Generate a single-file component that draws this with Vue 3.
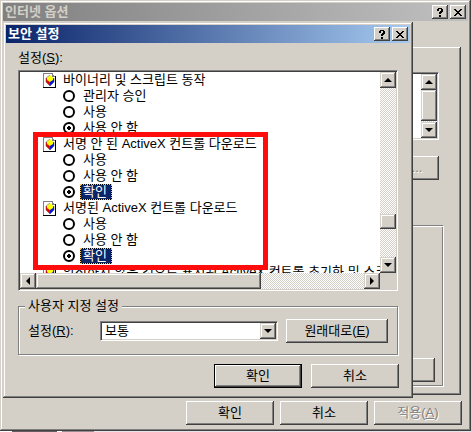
<script setup>
import { ref } from 'vue'

const groups = ref([
    {
        name: 'behavior',
        title: '바이너리 및 스크립트 동작',
        options: ['관리자 승인', '사용', '사용 안 함'],
        selected: '사용 안 함'
    },
    {
        name: 'unsigned',
        title: '서명 안 된 ActiveX 컨트롤 다운로드',
        options: ['사용', '사용 안 함', '확인'],
        selected: '확인'
    },
    {
        name: 'signed',
        title: '서명된 ActiveX 컨트롤 다운로드',
        options: ['사용', '사용 안 함', '확인'],
        selected: '확인'
    },
    {
        name: 'unsafe',
        title: '안전하지 않은 것으로 표시된 ActiveX 컨트롤 초기화 및 스크립트',
        options: [],
        selected: ''
    }
])

const levels = ['높음', '보통', '약간 낮음', '낮음']
const level = ref('보통')
</script>

<template>
    <div class="desktop">
        <div class="window">
            <header class="title_bar inactive">
                <h1>인터넷 옵션</h1>
                <button class="title_button" aria-label="도움말">
                    <svg width="8" height="9" viewBox="0 0 8 9" shape-rendering="crispEdges">
                        <path d="M2 0h4v1h1v3h-1v1h-1v1h-2v-2h1v-1h1v-2h-2v2h-2v-2h1zM3 7h2v2h-2z" />
                    </svg>
                </button>
                <button class="title_button" aria-label="닫기">
                    <svg width="8" height="7" viewBox="0 0 8 7" shape-rendering="crispEdges">
                        <path d="M0 0h2v1h1v1h2v-1h1v-1h2v1h-1v1h-1v1h-1v1h1v1h1v1h1v1h-2v-1h-1v-1h-2v1h-1v1h-2v-1h1v-1h1v-1h1v-1h-1v-1h-1v-1h-1z" />
                    </svg>
                </button>
            </header>

            <div class="tab_page">
                <div class="zone_list sunken">
                    <div class="zone_view"></div>
                    <div class="scroll_v">
                        <button class="scroll_button" aria-label="위로"><i class="arrow up"></i></button>
                        <div class="thumb zone_thumb"></div>
                        <div class="space"></div>
                        <button class="scroll_button" aria-label="아래로"><i class="arrow down"></i></button>
                    </div>
                </div>
                <div class="button_row sites">
                    <button class="push" disabled>사이트...</button>
                </div>
                <div class="level_box">
                    <button class="push" aria-label="기본 수준"></button>
                </div>
            </div>

            <footer class="button_row main_buttons">
                <button class="push">확인</button>
                <button class="push">취소</button>
                <button class="push" disabled>적용(<u>A</u>)</button>
            </footer>
        </div>
        <div class="behind"></div>

        <div class="window dialog" role="dialog">
            <header class="title_bar">
                <h1>보안 설정</h1>
                <button class="title_button" aria-label="도움말">
                    <svg width="8" height="9" viewBox="0 0 8 9" shape-rendering="crispEdges">
                        <path d="M2 0h4v1h1v3h-1v1h-1v1h-2v-2h1v-1h1v-2h-2v2h-2v-2h1zM3 7h2v2h-2z" />
                    </svg>
                </button>
                <button class="title_button" aria-label="닫기">
                    <svg width="8" height="7" viewBox="0 0 8 7" shape-rendering="crispEdges">
                        <path d="M0 0h2v1h1v1h2v-1h1v-1h2v1h-1v1h-1v1h-1v1h1v1h1v1h1v1h-2v-1h-1v-1h-2v1h-1v1h-2v-1h1v-1h1v-1h1v-1h-1v-1h-1v-1h-1z" />
                    </svg>
                </button>
            </header>

            <div class="dialog_body">
                <p id="settings_label" class="list_label">설정(<u>S</u>):</p>
                <div class="settings sunken" aria-labelledby="settings_label">
                    <div class="tree">
                        <div v-for="group of groups" :key="group.name" role="radiogroup">
                            <div class="row">
                                <svg class="doc" width="13" height="15" viewBox="0 0 13 15">
                                    <path d="M0 0h10v1h-9v13h-1z" fill="#808080" />
                                    <path d="M1 1h9v2h2v11h-11z" fill="#fff" />
                                    <path d="M12 3h1v12h-13v-1h12z" fill="#000" />
                                    <path d="M9 1h1v1h1v1h1v1h-3z" fill="#808080" />
                                    <path d="M3 5l4 2v6l-4-4z" fill="#f00000" />
                                    <path d="M11 5v4l-4 4v-6z" fill="#0010e0" />
                                    <path d="M7 2l3 3v2l-3 2l-3-2v-2z" fill="#ff0" />
                                    <path d="M7 2l-4 3v4l4 4l4-4v-4" fill="none" stroke="#404040" stroke-width="0.500" />
                                </svg>
                                <span>{{ group.title }}</span>
                            </div>
                            <label v-for="option of group.options" :key="option" class="row option">
                                <input type="radio" :name="group.name" :value="option" v-model="group.selected">
                                <span :class="{ marked: option === '확인' && group.selected === option }">{{ option }}</span>
                            </label>
                        </div>
                    </div>
                    <div class="scroll_v">
                        <button class="scroll_button" aria-label="위로"><i class="arrow up"></i></button>
                        <div class="space before"></div>
                        <div class="thumb"></div>
                        <div class="space after"></div>
                        <button class="scroll_button" aria-label="아래로"><i class="arrow down"></i></button>
                    </div>
                    <div class="scroll_h">
                        <button class="scroll_button" aria-label="왼쪽"><i class="arrow left"></i></button>
                        <div class="thumb wide"></div>
                        <div class="space"></div>
                        <button class="scroll_button" aria-label="오른쪽"><i class="arrow right"></i></button>
                    </div>
                    <div class="highlight"></div>
                </div>

                <fieldset class="custom">
                    <legend>사용자 지정 설정</legend>
                    <div class="custom_row">
                        <label for="level">설정(<u>R</u>):</label>
                        <div class="combo sunken">
                            <select id="level" v-model="level">
                                <option v-for="item of levels" :key="item">{{ item }}</option>
                            </select>
                            <span class="scroll_button drop"><i class="arrow down"></i></span>
                        </div>
                        <button class="push reset">원래대로(<u>E</u>)</button>
                    </div>
                </fieldset>

                <div class="button_row dialog_buttons">
                    <button class="push default">확인</button>
                    <button class="push">취소</button>
                </div>
            </div>
        </div>
    </div>
</template>

<style>
body {
    margin: 0;
    background-color: #fff;
}
</style>

<style scoped>
* {
    box-sizing: border-box;
}

.desktop {
    position: relative;
    font-family: "Liberation Sans", "Noto Sans CJK KR", sans-serif;
    font-size: 13px;
    line-height: 16px;
    color: #000;
    cursor: default;
}

button,
select {
    font: inherit;
    color: inherit;
    margin: 0;
    padding: 0;
}

.window {
    padding: 3px;
    background-color: #d4d0c8;
    box-shadow: inset -1px -1px #404040, inset 1px 1px #d4d0c8, inset -2px -2px #808080, inset 2px 2px #fff;
}

.title_bar {
    display: flex;
    align-items: center;
    height: 18px;
    padding: 0 2px;
    background: linear-gradient(to right, #0a246a, #a6caf0);
    color: #fff;
}

.title_bar.inactive {
    background: linear-gradient(to right, #808080, #c0c0c0);
    color: #d4d0c8;
}

.title_bar h1 {
    flex: 1;
    margin: 0;
    font-size: 13px;
    font-weight: bold;
}

.title_button,
.scroll_button,
.thumb {
    display: flex;
    flex: none;
    align-items: center;
    justify-content: center;
    width: 16px;
    height: 16px;
    border: none;
    background-color: #d4d0c8;
    box-shadow: inset -1px -1px #404040, inset 1px 1px #d4d0c8, inset -2px -2px #808080, inset 2px 2px #fff;
}

.title_button {
    height: 14px;
    margin-left: 2px;
    color: #000;
    box-shadow: inset -1px -1px #404040, inset 1px 1px #fff, inset -2px -2px #808080;
}

.sunken {
    border: 1px solid;
    border-color: #808080 #fff #fff #808080;
    padding: 1px;
    background-color: #fff;
    box-shadow: inset 1px 1px #404040, inset -1px -1px #d4d0c8;
}

.push {
    width: 88px;
    height: 24px;
    border: none;
    background-color: #d4d0c8;
    box-shadow: inset -1px -1px #404040, inset 1px 1px #fff, inset -2px -2px #808080;
}

.push:disabled {
    color: #808080;
    text-shadow: 1px 1px #fff;
}

.push.default {
    border: 1px solid #000;
}

.button_row {
    display: flex;
    justify-content: flex-end;
}

/* scroll bars */
.scroll_v,
.scroll_h {
    display: flex;
    background: repeating-conic-gradient(#d4d0c8 0 25%, #fff 0 50%) 0 0 / 2px 2px;
}

.scroll_v {
    flex-direction: column;
    width: 16px;
}

.space {
    flex: 1;
}

.arrow {
    border: 4px solid transparent;
}

.arrow.up {
    border-top: none;
    border-bottom-color: #000;
}

.arrow.down {
    border-bottom: none;
    border-top-color: #000;
}

.arrow.left {
    border-left: none;
    border-right-color: #000;
}

.arrow.right {
    border-right: none;
    border-left-color: #000;
}

/* internet options */
.tab_page {
    margin: 26px 7px 0;
    padding: 25px 22px 0;
    height: 348px;
    box-shadow: inset -1px -1px #404040, inset 1px 1px #fff, inset -2px -2px #808080;
}

.zone_list {
    display: flex;
    height: 68px;
}

.zone_view {
    flex: 1;
}

.zone_thumb {
    height: 31px;
}

.sites {
    margin-top: 16px;
}

.sites .push {
    padding-left: 8px;
}

.level_box {
    display: flex;
    align-items: flex-end;
    justify-content: flex-end;
    height: 162px;
    margin: 45px -5px 0;
    padding: 4px 8px;
    border: 1px solid #808080;
    border-right-color: #fff;
    border-bottom-color: #fff;
    box-shadow: inset 1px 1px #fff, inset -1px -1px #808080;
}

.main_buttons {
    gap: 6px;
    padding: 6px 6px 3px;
}

.behind {
    height: 1px;
    background: linear-gradient(to right, #fff 12px, #685c60 12px 57px, #fff 57px 62px, #988c90 62px 94px, #e8e4ec 94px);
}

/* security settings */
.dialog {
    position: absolute;
    top: 22px;
    left: 3px;
    right: 58px;
}

.dialog_body {
    padding: 7px 12px;
}

.list_label {
    margin: 0 0 4px;
}

.settings {
    position: relative;
    display: grid;
    grid-template-columns: minmax(0, 1fr) 16px;
    grid-template-rows: 201px 16px;
    background-color: #d4d0c8;
}

.tree {
    overflow: hidden;
    background-color: #fff;
}

.row {
    display: flex;
    align-items: center;
    gap: 7px;
    height: 16px;
    padding-left: 23px;
    white-space: nowrap;
}

.doc {
    flex: none;
}

.option {
    gap: 5px;
    padding-left: 43px;
}

.option input {
    appearance: none;
    flex: none;
    width: 12px;
    height: 12px;
    margin: 0;
    border: 2px solid #000;
    border-radius: 50%;
    background-color: #fff;
}

.option input:checked {
    background: radial-gradient(circle, #000 2px, #fff 2px);
}

.option span {
    padding: 0 3px;
    border: 0 dotted #f5c26b;
}

.option .marked {
    height: 16px;
    padding: 0 4px 0 2px;
    border-width: 1px;
    line-height: 14px;
    color: #fff;
    background: linear-gradient(#0a246a, #0a246a) padding-box, linear-gradient(#000, #000) border-box;
}

.before {
    flex: 126;
}

.after {
    flex: 28;
}

.settings .scroll_v .thumb {
    height: 15px;
}

.thumb.wide {
    width: 225px;
}

/* red frame over the two download settings */
.highlight {
    position: absolute;
    top: 61px;
    left: 14px;
    width: 235px;
    height: 138px;
    border: 5px solid #ff0c0c;
    pointer-events: none;
}

.custom {
    margin: 7px 0 0;
    padding: 0 9px 11px 8px;
    border: 1px solid #808080;
    box-shadow: 1px 1px #fff, inset 1px 1px #fff;
}

.custom legend {
    padding: 0 3px;
    margin-left: -2px;
    background-color: #d4d0c8;
}

.custom_row {
    display: flex;
    align-items: center;
    gap: 8px;
    padding-top: 5px;
}

.custom_row label {
    width: 64px;
    margin-left: 1px;
}

.combo {
    display: flex;
    flex: 1;
    height: 20px;
}

.combo select {
    appearance: none;
    flex: 1;
    min-width: 0;
    padding: 0 16px 0 3px;
    border: none;
    border-radius: 0;
    outline: none;
    background-color: transparent;
}

.drop {
    margin-left: -16px;
    pointer-events: none;
}

.reset {
    width: 102px;
}

.dialog_buttons {
    gap: 9px;
    margin-top: 9px;
    margin-right: -1px;
}
</style>
